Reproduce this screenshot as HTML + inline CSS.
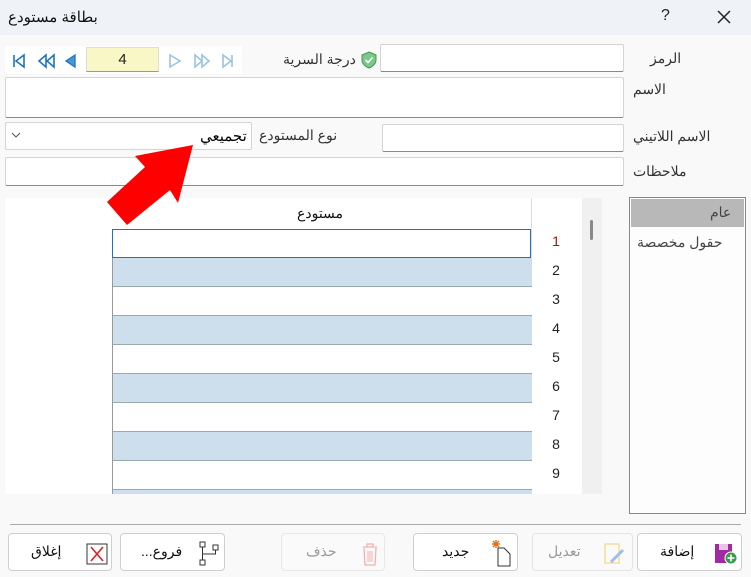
<!DOCTYPE html>
<html><head><meta charset="utf-8"><style>
*{box-sizing:border-box;margin:0;padding:0}
body{width:751px;height:577px;background:#f9f9f9;font-family:"Liberation Sans","Noto Sans CJK SC",sans-serif;position:relative;overflow:hidden;font-size:14px;color:#222}
.a{position:absolute}
.inp{position:absolute;background:#fff;border:1px solid #d4d4d4;border-bottom:1px solid #8a8a8a;border-radius:2px}
.lbl{position:absolute;font-size:14px;color:#333;direction:rtl}
.btn{position:absolute;top:533px;height:38px;background:#fff;border:1px solid #cfcfcf;border-radius:4px}
.btn span{position:absolute;top:9px;font-size:14px;color:#111;direction:rtl}
.row{position:absolute;left:112px;width:420px;height:29px;border-bottom:1px solid #9aa;background:#fff}
.row.b{background:#cddfec}
.num{position:absolute;left:548px;width:16px;text-align:center;font-size:14px}
</style></head><body>
<div class="a" style="left:0;top:0;width:751px;height:35px;background:#eff2f7"></div>
<div class="lbl" style="left:8px;top:8px;font-size:15px;color:#111">بطاقة مستودع</div>
<div class="a" style="left:661px;top:7px;font-size:16px">?</div>
<svg class="a" style="left:716px;top:9px" width="16" height="16"><path d="M2 2L14 14M14 2L2 14" stroke="#222" stroke-width="1.5"/></svg>

<div class="a" style="left:5px;top:46px;width:237px;height:28px;background:#fff"></div>
<svg class="a" style="left:10px;top:53px" width="230" height="16">
<path d="M4 2V14" stroke="#1f74c0" stroke-width="1.6"/><path d="M14 2L6 8L14 14Z" fill="none" stroke="#1f74c0" stroke-width="1.6"/>
<path d="M36 2L29 8L36 14ZM44 2L37 8L44 14Z" fill="none" stroke="#1f74c0" stroke-width="1.6"/>
<path d="M65 2L56 8L65 14Z" fill="#4a97d6" stroke="#1f74c0" stroke-width="1.3"/>
<path d="M160 2L170 8L160 14Z" fill="none" stroke="#9cc3e0" stroke-width="1.6"/>
<path d="M185 2L192 8L185 14ZM192 2L199 8L192 14Z" fill="none" stroke="#9cc3e0" stroke-width="1.6"/>
<path d="M213 2L221 8L213 14Z" fill="none" stroke="#9cc3e0" stroke-width="1.6"/><path d="M222 2V14" stroke="#9cc3e0" stroke-width="1.6"/>
</svg>
<div class="a" style="left:86px;top:47px;width:73px;height:25px;background:#f9f7c6;border:1px solid #ddd;border-bottom:1px solid #999;text-align:center;line-height:23px;font-size:15px">4</div>
<div class="lbl" style="left:283px;top:51px">درجة السرية</div>
<svg class="a" style="left:360px;top:51px" width="18" height="18"><path d="M9 1L16 4V9C16 13 12 16 9 17C6 16 2 13 2 9V4Z" fill="#7cc88a" stroke="#3f9a52"/><path d="M5.5 9L8 11.5L12.5 6.5" stroke="#fff" stroke-width="1.6" fill="none"/></svg>
<div class="inp" style="left:380px;top:44px;width:244px;height:28px"></div>
<div class="lbl" style="left:650px;top:50px">الرمز</div>
<div class="inp" style="left:5px;top:77px;width:619px;height:41px"></div>
<div class="lbl" style="left:633px;top:81px">الاسم</div>
<div class="inp" style="left:5px;top:122px;width:247px;height:28px;border-bottom-color:#d4d4d4"></div>
<svg class="a" style="left:11px;top:131px" width="10" height="8"><path d="M1 2L5 6L9 2" stroke="#555" fill="none"/></svg>
<div class="lbl" style="left:200px;top:127px;font-size:15px;color:#000">تجميعي</div>
<div class="lbl" style="left:259px;top:127px">نوع المستودع</div>
<div class="inp" style="left:382px;top:124px;width:242px;height:28px"></div>
<div class="lbl" style="left:633px;top:128px">الاسم اللاتيني</div>
<div class="inp" style="left:5px;top:157px;width:619px;height:29px"></div>
<div class="lbl" style="left:633px;top:163px">ملاحظات</div>

<div class="a" style="left:5px;top:198px;width:597px;height:296px;background:#fff;overflow:hidden">
<div class="a" style="left:577px;top:0;width:20px;height:296px;background:#f0f0f0"></div>
<div class="a" style="left:585px;top:22px;width:3px;height:20px;background:#888;border-radius:2px"></div>
<div class="a" style="left:526px;top:0;width:1px;height:296px;background:#ddd"></div>
</div>
<div class="lbl" style="left:297px;top:205px;color:#111">مستودع</div>
<div class="row" style="top:258px" ></div>
<div class="row b" style="top:258px"></div><div class="row" style="top:287px"></div>
<div class="row b" style="top:316px"></div><div class="row" style="top:345px"></div>
<div class="row b" style="top:374px"></div><div class="row" style="top:403px"></div>
<div class="row b" style="top:432px"></div><div class="row" style="top:461px"></div>
<div class="row b" style="top:490px;height:4px;border:0"></div>
<div class="a" style="left:112px;top:229px;width:1px;height:265px;background:#999"></div>
<div class="a" style="left:112px;top:229px;width:419px;height:29px;border:1.5px solid #1a73c8;background:#fff"></div>
<div class="num" style="top:233px;color:#c00">1</div><div class="num" style="top:262px">2</div>
<div class="num" style="top:291px">3</div><div class="num" style="top:320px">4</div>
<div class="num" style="top:349px">5</div><div class="num" style="top:378px">6</div>
<div class="num" style="top:407px">7</div><div class="num" style="top:436px">8</div>
<div class="num" style="top:465px">9</div>

<div class="a" style="left:629px;top:197px;width:117px;height:317px;background:#fdfdfd;border:1px solid #888"></div>
<div class="a" style="left:631px;top:199px;width:113px;height:28px;background:#b8b8b8"></div>
<div class="lbl" style="left:710px;top:204px;color:#444">عام</div>
<div class="lbl" style="left:637px;top:234px;color:#444">حقول مخصصة</div>

<svg class="a" style="left:0;top:0" width="751" height="577"><polygon points="193,145 135,156 145,167 107,202 127,225 170,190 178,203" fill="#f00"/></svg>

<div class="a" style="left:10px;top:524px;width:731px;height:1px;background:#aaa"></div>

<div class="btn" style="left:637px;width:105px"><span style="left:22px">إضافة</span>
<svg class="a" style="left:76px;top:8px" width="26" height="24"><rect x="1" y="2" width="17" height="19" fill="#a02aa0"/><rect x="5" y="2" width="9" height="6" fill="#e7c5e7"/><circle cx="17" cy="16" r="6" fill="#3a9a4a" stroke="#fff"/><path d="M17 12.5V19.5M13.5 16H20.5" stroke="#fff" stroke-width="1.6"/></svg></div>
<div class="btn" style="left:532px;width:101px;border-color:#e4e4e4;background:#fafafa"><span style="left:15px;color:#999">تعديل</span>
<svg class="a" style="left:70px;top:9px" width="24" height="22"><rect x="2" y="1" width="14" height="19" fill="none" stroke="#f5dc9c" stroke-width="1.5"/><path d="M8 19L20 7" stroke="#9cc0e8" stroke-width="3"/></svg></div>
<div class="btn" style="left:413px;width:105px"><span style="left:28px">جديد</span>
<svg class="a" style="left:76px;top:5px" width="24" height="28"><path d="M8 9H14L20 15V27H8Z" fill="#fff" stroke="#333"/><path d="M6 1V9M2 5H10M3 2L9 8M9 2L3 8" stroke="#e07020" stroke-width="1.4"/></svg></div>
<div class="btn" style="left:281px;width:104px;border-color:#e8e8e8;background:#fafafa"><span style="left:24px;color:#999">حذف</span>
<svg class="a" style="left:78px;top:7px" width="20" height="26"><path d="M3 6H17M7 6V3H13V6M4 7L5 24H15L16 7" fill="none" stroke="#f4b0b0" stroke-width="1.3"/><path d="M8 10V21M10 10V21M12 10V21" stroke="#f4b0b0"/></svg></div>
<div class="btn" style="left:120px;width:105px"><span style="left:20px">فروع...</span>
<svg class="a" style="left:78px;top:7px" width="22" height="26"><rect x="1" y="1" width="5" height="5" fill="none" stroke="#333"/><rect x="14" y="4" width="5" height="5" fill="none" stroke="#333"/><rect x="1" y="19" width="5" height="5" fill="none" stroke="#333"/><path d="M3.5 6V19M3.5 13H16.5V9" stroke="#333" fill="none"/></svg></div>
<div class="btn" style="left:8px;width:104px"><span style="left:22px">إغلاق</span>
<svg class="a" style="left:77px;top:9px" width="22" height="22"><rect x="1" y="1" width="20" height="20" fill="#fff" stroke="#333"/><path d="M5 4L17 18M17 4L5 18" stroke="#e02020" stroke-width="1.6"/></svg></div>
</body></html>
